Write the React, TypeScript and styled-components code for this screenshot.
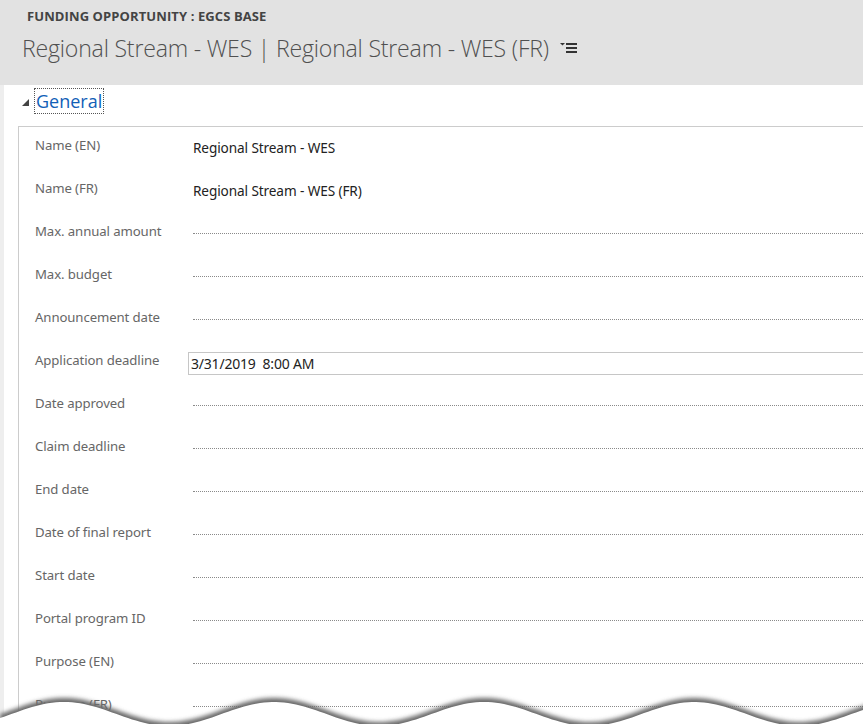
import * as React from 'react';
import styled, { createGlobalStyle } from 'styled-components';

const fields: { label: string; value?: string; input?: boolean }[] = [
  { label: 'Name (EN)', value: 'Regional Stream - WES' },
  { label: 'Name (FR)', value: 'Regional Stream - WES (FR)' },
  { label: 'Max. annual amount' },
  { label: 'Max. budget' },
  { label: 'Announcement date' },
  { label: 'Application deadline', value: '3/31/2019\u00a0\u00a08:00 AM', input: true },
  { label: 'Date approved' },
  { label: 'Claim deadline' },
  { label: 'End date' },
  { label: 'Date of final report' },
  { label: 'Start date' },
  { label: 'Portal program ID' },
  { label: 'Purpose (EN)' },
  { label: 'Purpose (FR)' },
];

// sampled wave for the torn bottom edge
const wavePoints = (offset: number): string => {
  const pts: string[] = [];
  for (let x = 0; x <= 870; x += 4) {
    const t = (2 * Math.PI * (x - 64)) / 210;
    const y = 30 - 12 * Math.cos(t) + offset;
    pts.push(`${x},${y.toFixed(1)}`);
  }
  return `M0,60 L${pts.join(' L')} L870,60 Z`;
};

const App: React.FC = () => (
  <Page>
    <GlobalStyle />
    <Header>
      <EntityType>FUNDING OPPORTUNITY : EGCS BASE</EntityType>
      <TitleRow>
        <RecordTitle>Regional Stream - WES | Regional Stream - WES (FR)</RecordTitle>
        <svg width="18" height="12" viewBox="0 0 18 12">
          <polygon points="0,1 5,1 2.5,3.5" fill="#333" />
          <rect x="6" y="1" width="11" height="2" fill="#333" />
          <rect x="6" y="5" width="11" height="2" fill="#333" />
          <rect x="6" y="9" width="11" height="2" fill="#333" />
        </svg>
      </TitleRow>
    </Header>
    <Body>
      <SectionHead>
        <svg width="7" height="7" viewBox="0 0 7 7">
          <polygon points="7,0 7,7 0,7" fill="#444" />
        </svg>
        <SectionLink>General</SectionLink>
      </SectionHead>
      <Panel>
        {fields.map((f) => (
          <Row key={f.label}>
            <Label>{f.label}</Label>
            {f.input ? (
              <InputBox>{f.value}</InputBox>
            ) : f.value ? (
              <Value>{f.value}</Value>
            ) : (
              <Empty />
            )}
          </Row>
        ))}
      </Panel>
    </Body>
    <Torn width="863" height="44" viewBox="0 0 863 44" preserveAspectRatio="none">
      <defs>
        <filter id="soft" x="-5%" y="-50%" width="110%" height="200%">
          <feGaussianBlur stdDeviation="2" />
        </filter>
      </defs>
      <path d={wavePoints(0)} fill="#6a6a6a" filter="url(#soft)" />
      <path d={wavePoints(4)} fill="#ffffff" />
    </Torn>
  </Page>
);

const GlobalStyle = createGlobalStyle`
  html, body {
    margin: 0;
    padding: 0;
    background: #ffffff;
  }
  body {
    font-family: "Noto Sans", "Open Sans", sans-serif;
  }
`;

const Page = styled.div`
  position: relative;
  width: 863px;
  height: 724px;
  overflow: hidden;
  background: #ffffff;
`;

const Header = styled.header`
  height: 85px;
  box-sizing: border-box;
  padding: 8px 0 0 22px;
  background: #e2e2e2;
`;

const EntityType = styled.div`
  padding-left: 5px;
  font-family: "Open Sans", sans-serif;
  font-size: 13px;
  font-weight: 700;
  color: #444444;
  line-height: 16px;
  letter-spacing: 0.1px;
`;

const TitleRow = styled.div`
  display: flex;
  align-items: center;
  gap: 11px;
  margin-top: 9px;
`;

const RecordTitle = styled.h1`
  margin: 0;
  font-family: "Open Sans", sans-serif;
  font-weight: 300;
  font-size: 23.1px;
  line-height: 30px;
  color: #505050;
  letter-spacing: -0.2px;
`;

const Body = styled.div`
  border-left: 4px solid #eeeeee;
  padding-left: 14px;
`;

const SectionHead = styled.div`
  display: flex;
  align-items: center;
  gap: 6px;
  height: 41px;
  padding-left: 4px;
  padding-bottom: 10px;
  box-sizing: border-box;
  svg {
    margin-top: 3px;
  }
`;

const SectionLink = styled.span`
  font-family: "Open Sans", sans-serif;
  font-size: 18px;
  line-height: 24px;
  color: #1160b7;
  outline: 1px dotted #555555;
  outline-offset: 0;
  padding: 0 1px;
`;

const Panel = styled.section`
  border: 1px solid #cccccc;
  border-right: none;
  padding: 9px 0 0 16px;
`;

const Row = styled.div`
  display: grid;
  grid-template-columns: 158px 1fr;
  align-items: start;
  height: 43px;
`;

const Label = styled.div`
  font-size: 13.2px;
  line-height: 18px;
  color: #666666;
  letter-spacing: -0.1px;
`;

const Value = styled.div`
  padding-top: 3px;
  font-size: 13.6px;
  line-height: 18px;
  color: #222222;
  letter-spacing: -0.1px;
`;

const Empty = styled.div`
  height: 11px;
  border-bottom: 1px dotted #8a8a8a;
`;

const InputBox = styled.div`
  margin: 1px 0 0 -5px;
  height: 23px;
  box-sizing: border-box;
  border: 1px solid #c6c6c6;
  border-right: none;
  padding-left: 2px;
  font-size: 14px;
  line-height: 21px;
  color: #222222;
  letter-spacing: -0.2px;
`;

const Torn = styled.svg`
  position: absolute;
  left: 0;
  bottom: 0;
  display: block;
`;

export default App;
